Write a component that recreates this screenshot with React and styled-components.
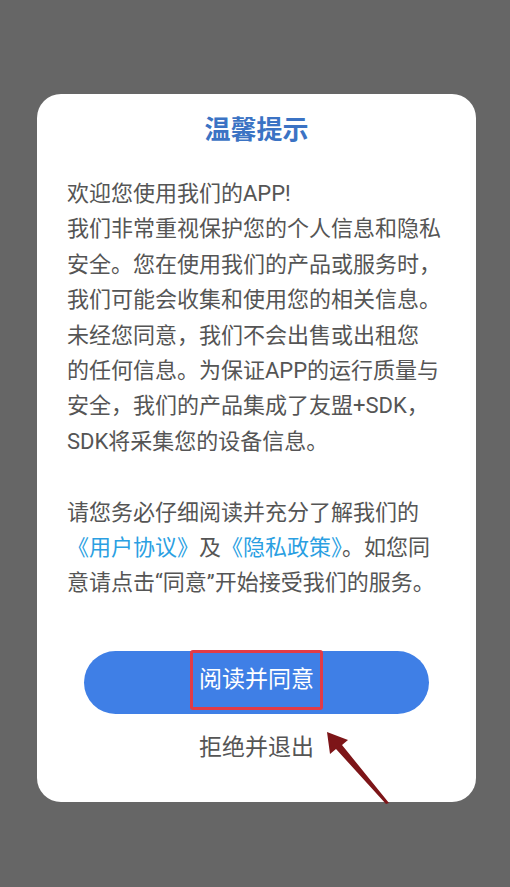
import styled, { createGlobalStyle } from 'styled-components'

const GlobalStyle = createGlobalStyle`
	html, body {
		margin: 0;
		padding: 0;
		background: #666666;
	}
	body {
		font-family: Roboto, "Noto Sans CJK SC", "Noto Sans", sans-serif;
	}
`

const Screen = styled.div`
	width: 510px;
	height: 887px;
	padding-top: 94px;
	box-sizing: border-box;
	background: #666666;
	overflow: hidden;
`

const Card = styled.div`
	position: relative;
	margin-left: 37px;
	width: 439px;
	height: 708px;
	box-sizing: border-box;
	background: #ffffff;
	border-radius: 24px;
	padding: 18px 30px 0 30px;
	display: flex;
	flex-direction: column;
`

const Title = styled.h2`
	margin: 0;
	text-align: center;
	font-size: 26px;
	line-height: 36px;
	font-weight: 700;
	color: #3b73c4;
`

const Body = styled.div`
	margin-top: 28px;
	font-size: 22px;
	line-height: 35.4px;
	color: #555555;
	white-space: nowrap;
`

const Line = styled.div`
	height: 35.4px;
`

const Link = styled.span`
	color: #2b9fe2;
`

const Quote = styled.span`
	font-family: Roboto, sans-serif;
`

const Actions = styled.div`
	margin-top: 50px;
	display: flex;
	flex-direction: column;
	align-items: center;
`

const AgreeButton = styled.button`
	width: 345px;
	height: 63px;
	border: none;
	border-radius: 32px;
	background: #3f7fe6;
	color: #ffffff;
	font-family: inherit;
	font-size: 23px;
	display: flex;
	align-items: center;
	justify-content: center;
	padding: 0;
	cursor: pointer;
`

const Marked = styled.span`
	display: inline-block;
	border: 3px solid #e23b47;
	border-radius: 3px;
	padding: 0 6px;
	line-height: 54px;
	margin-top: -4px;
`

const Refuse = styled.div`
	margin-top: 16px;
	font-size: 23px;
	line-height: 36px;
	color: #555555;
`

const Pointer = styled.svg`
	position: absolute;
	left: 0;
	top: 0;
	width: 100%;
	height: 100%;
	pointer-events: none;
	overflow: visible;
`

const App = () => {
	return (
		<Screen>
			<GlobalStyle />
			<Card>
				<Title>温馨提示</Title>
				<Body>
					<Line>欢迎您使用我们的APP!</Line>
					<Line>我们非常重视保护您的个人信息和隐私</Line>
					<Line>安全。您在使用我们的产品或服务时，</Line>
					<Line>我们可能会收集和使用您的相关信息。</Line>
					<Line>未经您同意，我们不会出售或出租您</Line>
					<Line>的任何信息。为保证APP的运行质量与</Line>
					<Line>安全，我们的产品集成了友盟+SDK，</Line>
					<Line>SDK将采集您的设备信息。</Line>
					<Line />
					<Line>请您务必仔细阅读并充分了解我们的</Line>
					<Line>
						<Link>《用户协议》</Link>及<Link>《隐私政策》</Link>。如您同
					</Line>
					<Line>
						意请点击<Quote>“</Quote>同意<Quote>”</Quote>开始接受我们的服务。
					</Line>
				</Body>
				<Actions>
					<AgreeButton>
						<Marked>阅读并同意</Marked>
					</AgreeButton>
					<Refuse>拒绝并退出</Refuse>
				</Actions>
				<Pointer viewBox="0 0 439 708">
					<polygon
						points="290,638 311,646 305,651 352,709 349,710 299,655 293,660"
						fill="#7d1518"
					/>
				</Pointer>
			</Card>
		</Screen>
	)
}

export default App
